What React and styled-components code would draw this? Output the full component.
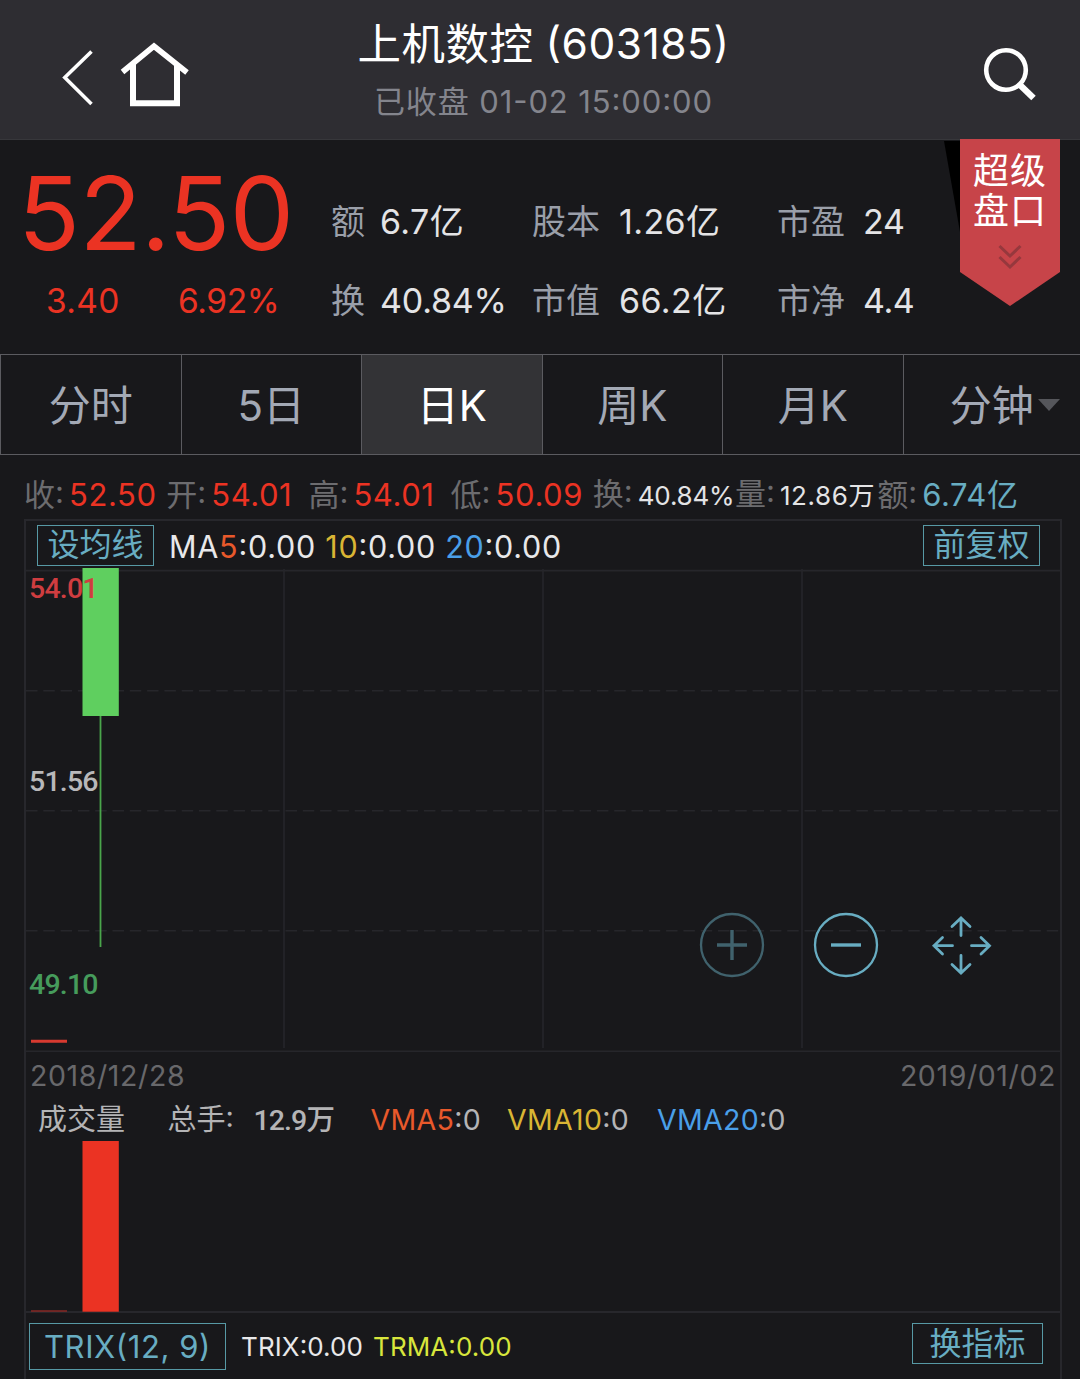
import React, { useState } from 'react';
import styled, { createGlobalStyle } from 'styled-components';

const GlobalStyle = createGlobalStyle`
  * {
    box-sizing: border-box;
  }
  body {
    margin: 0;
    background-color: #18181b;
    font-family: Inter, 'Noto Sans CJK SC', sans-serif;
    font-weight: 400;
    font-feature-settings: 'case';
    overflow: hidden;
  }
`;

const Page = styled.div`
  width: 1080px;
  height: 1379px;
  overflow: hidden;
  background-color: #18181b;
`;

const Text = styled.span`
  font-size: ${({ $size }) => $size}px;
  letter-spacing: ${({ $gap }) => $gap}px;
  color: ${({ $color }) => $color || 'inherit'};
  white-space: pre;
`;

const Header = styled.header`
  height: 140px;
  display: grid;
  grid-template-columns: 340px 1fr 340px;
  background-color: #2e2d32;
  border-bottom: 1px solid #37373b;
`;
const HeaderLeft = styled.div`
  display: flex;
  padding: 40px 0 0 60px;
  gap: 22px;
`;
const HeaderRight = styled.div`
  display: flex;
  justify-content: flex-end;
  padding: 44px 41px 0 0;
`;
const HeaderTitle = styled.div`
  display: flex;
  flex-direction: column;
  align-items: center;
  padding: 15px 0 0 7px;
  line-height: 58px;
  color: #fff;
  white-space: nowrap;
  .name {
    display: flex;
    gap: 12px;
  }
`;

const Quote = styled.section`
  height: 214px;
  display: flex;
  position: relative;
`;
const PriceBox = styled.div`
  width: 331px;
  padding: 13px 0 0 18px;
  color: #eb3323;
  .price {
    font-size: 102px;
    line-height: 120px;
    letter-spacing: -0.6px;
  }
  .change {
    display: grid;
    grid-template-columns: 132px 1fr;
    padding-left: 28px;
    margin-top: 8px;
    line-height: 40px;
  }
`;
const StatGrid = styled.div`
  display: grid;
  grid-template-columns: 49px 152px 87px 158px 86px 80px;
  grid-template-rows: 78px 79px;
  align-items: center;
  padding-top: 43px;
  line-height: 40px;
  white-space: nowrap;
`;
const Ribbon = styled.div`
  position: absolute;
  top: -1px;
  left: 944px;
  width: 116px;
  height: 168px;
  .name {
    position: absolute;
    top: 12px;
    left: 29px;
    width: 76px;
    font-size: 36px;
    line-height: 40px;
    letter-spacing: 1px;
    color: #fff;
  }
`;

const Tabs = styled.nav`
  height: 101px;
  display: flex;
  border: 1px solid #5b5b60;
  border-right: none;
`;
const Tab = styled.button`
  width: 180.5px;
  flex: none;
  display: flex;
  align-items: center;
  justify-content: center;
  padding: 2px 0 0;
  border: none;
  border-right: 1px solid #5b5b60;
  background-color: ${({ $active }) => ($active ? '#333336' : 'transparent')};
  color: ${({ $active }) => ($active ? '#fff' : '#a3a9b5')};
  font-family: inherit;
  font-feature-settings: inherit;
  font-size: 42px;
  line-height: 50px;
  svg {
    margin: -2px -23px 0 4px;
  }
`;

const Ohlc = styled.div`
  height: 64px;
  display: grid;
  grid-template-columns: repeat(7, 142.2px);
  align-items: center;
  padding: 16px 0 0 24px;
  line-height: 46px;
  white-space: nowrap;
`;
const OhlcItem = styled.div`
  display: grid;
  grid-template-columns: 45px 1fr;
  align-items: baseline;
`;

const Frame = styled.main`
  width: 1038px;
  height: 862px;
  margin-left: 24px;
  border: 2px solid #27272c;
  border-bottom: none;
`;
const FrameRow = styled.div`
  height: ${({ $height }) => $height}px;
  display: flex;
  align-items: ${({ $align }) => $align || 'center'};
  justify-content: space-between;
  padding: ${({ $pad }) => $pad};
  white-space: nowrap;
`;
const Group = styled.div`
  display: flex;
  align-items: center;
  gap: ${({ $gap }) => $gap}px;
`;
const Averages = styled.div`
  padding-top: 3px;
  color: #e8e8ea;
`;
const OutlineButton = styled.button`
  width: ${({ $width }) => $width}px;
  height: ${({ $height }) => $height}px;
  padding: 0;
  border: 1px solid #5799a5;
  background: transparent;
  color: #68adc2;
  font-family: inherit;
  font-feature-settings: inherit;
  font-size: ${({ $size }) => $size}px;
  letter-spacing: ${({ $gap }) => $gap || 0}px;
  line-height: 1;
  white-space: nowrap;
`;

const Pane = styled.div`
  position: relative;
  height: ${({ $height }) => $height}px;
  svg {
    display: block;
    overflow: visible;
  }
`;
const PriceLabel = styled.div`
  position: absolute;
  left: 3px;
  top: ${({ $top }) => $top}px;
  font-family: Roboto, sans-serif;
  font-size: 28.5px;
  line-height: 34px;
  font-weight: 500;
  letter-spacing: -0.8px;
  color: ${({ $color }) => $color};
`;
const Controls = styled.div`
  position: absolute;
  left: 671.5px;
  top: 342px;
  display: flex;
  gap: 46.8px;
`;
const ControlButton = styled.button`
  width: 68px;
  height: 68px;
  padding: 0;
  border: none;
  background: none;
  color: ${({ $dim }) => ($dim ? '#40626d' : '#68adc2')};
`;
const VolumeHead = styled.div`
  height: 41px;
  display: grid;
  grid-template-columns: 129.5px 86px 117px 136.5px 150px 1fr;
  align-items: baseline;
  padding-left: 12px;
  line-height: 41px;
  color: #b4b4b6;
  white-space: nowrap;
  b {
    font-family: Roboto, 'Noto Sans CJK SC', sans-serif;
    font-size: 28.5px;
    font-weight: 500;
    letter-spacing: -0.9px;
  }
`;

const stats = [
  ['额', '6.7亿'],
  ['股本', '1.26亿'],
  ['市盈', '24', -0.2],
  ['换', '40.84%', -0.2],
  ['市值', '66.2亿'],
  ['市净', '4.4', -0.4],
];

const periods = ['分时', '5日', '日K', '周K', '月K', '分钟'];

const ohlc = [
  { label: '收', value: '52.50', color: '#eb3323' },
  { label: '开', value: '54.01', color: '#eb3323' },
  { label: '高', value: '54.01', color: '#eb3323' },
  { label: '低', value: '50.09', color: '#eb3323' },
  { label: '换', value: '40.84%', color: '#e4e4e6', size: 26, gap: -0.2 },
  { label: '量', value: '12.86万', color: '#e4e4e6', size: 26, gap: 0.6 },
  { label: '额', value: '6.74亿', color: '#68adc2' },
];

const movingAverages = [
  { period: '5', color: '#e8592b' },
  { period: '10', color: '#d9b534' },
  { period: '20', color: '#4a9fe8' },
];

const TitleBar = () => (
  <Header>
    <HeaderLeft>
      <svg width='36' height='68' fill='none' stroke='#fff' strokeWidth='3.6'>
        <path d='M31.5 11.5 4.8 37.5 31.5 64' />
      </svg>
      <svg width='72' height='68' fill='none' stroke='#fff' strokeWidth='6'>
        <path d='M4.5 32 36 6.2 69 32.5' strokeWidth='5.6' />
        <path d='M15 24V63.3H59V24' />
      </svg>
    </HeaderLeft>
    <HeaderTitle>
      <div className='name'>
        <Text $size={43.5} $gap={0.5}>
          上机数控
        </Text>
        <Text $size={42.5} $gap={0.5}>
          (603185)
        </Text>
      </div>
      <Text $size={31} $gap={0.9} $color='#84858d'>
        已收盘 01-02 15:00:00
      </Text>
    </HeaderTitle>
    <HeaderRight>
      <svg width='56' height='60' fill='none' stroke='#fff'>
        <circle cx='23' cy='26' r='19.8' strokeWidth='4.6' />
        <path d='M36.5 40.5 50.5 54' strokeWidth='6.4' />
      </svg>
    </HeaderRight>
  </Header>
);

const QuotePanel = () => (
  <Quote>
    <PriceBox>
      <div className='price'>52.50</div>
      <div className='change'>
        <Text $size={33.5} $gap={0.3}>
          3.40
        </Text>
        <Text $size={33.5} $gap={-0.4}>
          6.92%
        </Text>
      </div>
    </PriceBox>
    <StatGrid>
      {stats.map(([label, value, gap = 0.4]) => (
        <React.Fragment key={label}>
          <Text $size={34} $gap={0} $color='#9a9fa9'>
            {label}
          </Text>
          <Text $size={34} $gap={gap} $color='#e4e4e6'>
            {value}
          </Text>
        </React.Fragment>
      ))}
    </StatGrid>
    <Ribbon>
      <svg width='116' height='168'>
        <path d='M0 2H16V93Z' fill='#000' />
        <path d='M16 0H116V133L66 167 16 133Z' fill='#c74449' />
        <path
          d='M55.5 107 66 117 76.5 107M55.5 118 66 128 76.5 118'
          fill='none'
          stroke='#96383d'
          strokeWidth='3'
        />
      </svg>
      <div className='name'>超级盘口</div>
    </Ribbon>
  </Quote>
);

const PeriodTabs = () => {
  const [active, setActive] = useState('日K');

  return (
    <Tabs>
      {periods.map((name) => (
        <Tab
          key={name}
          $active={active === name}
          onClick={() => setActive(name)}
        >
          {name}
          {name === '分钟' && (
            <svg width='22' height='12'>
              <path d='M0 0H22L11 12Z' fill='#55565b' />
            </svg>
          )}
        </Tab>
      ))}
    </Tabs>
  );
};

const PriceChart = () => (
  <Pane $height={482}>
    <svg width='1034' height='482' fill='none'>
      <g stroke='#26262b' strokeWidth='1.6'>
        <path d='M0 1.6H1034M0 482.3H1034' />
        <path d='M258 0V479M517 0V479M776 0V479' />
        <path
          d='M0 121.7H1034M0 241.7H1034M0 361.7H1034'
          strokeDasharray='11.5 5.8'
        />
      </g>
      <path d='M74.5 146V378' stroke='#4aa54b' strokeWidth='1.8' />
      <rect x='56.5' y='-1' width='36.3' height='148' fill='#5fcf5f' />
      <path d='M5 472.2H41' stroke='#d83a30' strokeWidth='3' />
    </svg>
    <PriceLabel $top={3} $color='#cf3d40'>
      54.01
    </PriceLabel>
    <PriceLabel $top={196} $color='#b8b8ba'>
      51.56
    </PriceLabel>
    <PriceLabel $top={399} $color='#469c5c'>
      49.10
    </PriceLabel>
    <Controls>
      <ControlButton $dim>
        <svg width='68' height='68' fill='none' stroke='currentColor'>
          <circle cx='34' cy='34' r='31' strokeWidth='2.3' />
          <path d='M19 34H49M34 19V49' strokeWidth='3.4' />
        </svg>
      </ControlButton>
      <ControlButton>
        <svg width='68' height='68' fill='none' stroke='currentColor'>
          <circle cx='34' cy='34' r='31' strokeWidth='2.3' />
          <path d='M19 34H49' strokeWidth='3.4' />
        </svg>
      </ControlButton>
      <ControlButton>
        <svg
          width='68'
          height='68'
          fill='none'
          stroke='currentColor'
          strokeWidth='2.8'
          strokeLinecap='round'
        >
          <path d='M34 24.5V7M25 15.5 34 7 43 15.5' />
          <path d='M34 44.5V62M25 53.5 34 62 43 53.5' />
          <path d='M25.5 34.7H7M15.5 26.5 7 34.7 15.5 43' />
          <path d='M44.5 34.7H62M54 26.5 62.5 34.7 54 43' />
        </svg>
      </ControlButton>
    </Controls>
  </Pane>
);

const VolumeChart = () => (
  <Pane $height={173}>
    <svg width='1034' height='173'>
      <path d='M0 172H1034' stroke='#27272c' strokeWidth='2' />
      <rect x='56.5' y='1' width='36.3' height='170.7' fill='#eb3323' />
      <rect x='5' y='170.3' width='36' height='1.4' fill='#8f2a25' />
    </svg>
  </Pane>
);

const App = () => {
  return (
    <Page>
      <GlobalStyle />
      <TitleBar />
      <QuotePanel />
      <PeriodTabs />
      <Ohlc>
        {ohlc.map(({ label, value, color, size = 31, gap = 0.6 }) => (
          <OhlcItem key={label}>
            <Text $size={31} $gap={0} $color='#6c6c6f'>
              {label}:
            </Text>
            <Text $size={size} $gap={gap} $color={color}>
              {value}
            </Text>
          </OhlcItem>
        ))}
      </Ohlc>
      <Frame>
        <FrameRow $height={48} $pad='0 20px 0 11px'>
          <Group $gap={15}>
            <OutlineButton $width={117} $height={41} $size={32}>
              设均线
            </OutlineButton>
            <Averages>
              <Text $size={30.5} $gap={0.75}>
                MA
              </Text>
              {movingAverages.map(({ period, color }, i) => (
                <Text key={period} $size={30.5} $gap={0.75}>
                  {i > 0 && ' '}
                  <Text $size={30.5} $gap={0.75} $color={color}>
                    {period}
                  </Text>
                  :0.00
                </Text>
              ))}
            </Averages>
          </Group>
          <OutlineButton $width={117} $height={41} $size={32}>
            前复权
          </OutlineButton>
        </FrameRow>
        <PriceChart />
        <FrameRow $height={48} $pad='0 4px'>
          <Text $size={28.5} $gap={0.6} $color='#68686b'>
            2018/12/28
          </Text>
          <Text $size={28.5} $gap={0.6} $color='#68686b'>
            2019/01/02
          </Text>
        </FrameRow>
        <VolumeHead>
          <Text $size={29}>成交量</Text>
          <Text $size={29}>总手:</Text>
          <b>12.9万</b>
          {movingAverages.map(({ period, color }) => (
            <Text key={period} $size={28.5} $gap={0.3}>
              <Text $size={28.5} $gap={0.3} $color={color}>
                VMA{period}
              </Text>
              :0
            </Text>
          ))}
        </VolumeHead>
        <VolumeChart />
        <FrameRow $height={66} $align='flex-start' $pad='10px 17px 0 3px'>
          <Group $gap={15}>
            <OutlineButton $width={197} $height={47} $size={31} $gap={0.6}>
              TRIX(12, 9)
            </OutlineButton>
            <Group $gap={10}>
              <Text $size={26} $gap={0.1} $color='#e8e8ea'>
                TRIX:0.00
              </Text>
              <Text $size={26} $gap={0.1} $color='#d8e63c'>
                TRMA:0.00
              </Text>
            </Group>
          </Group>
          <OutlineButton $width={131} $height={41} $size={32}>
            换指标
          </OutlineButton>
        </FrameRow>
      </Frame>
    </Page>
  );
};

export default App;
